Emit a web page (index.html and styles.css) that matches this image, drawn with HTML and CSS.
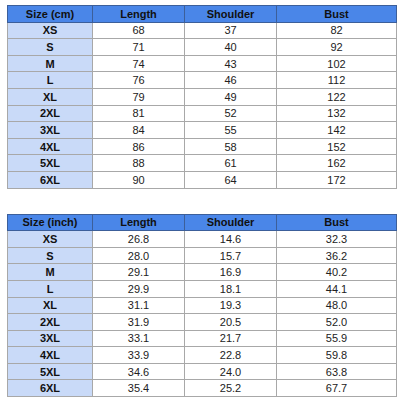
FILE: index.html
```html
<!DOCTYPE html>
<html>
<head>
<meta charset="utf-8">
<link rel="stylesheet" href="styles.css">
</head>
<body>
<div class="page">
<table class="size-table">
  <colgroup><col class="c1"><col class="c2"><col class="c3"><col class="c4"></colgroup>
  <thead><tr><th>Size (cm)</th><th>Length</th><th>Shoulder</th><th>Bust</th></tr></thead>
  <tbody>
    <tr><th>XS</th><td>68</td><td>37</td><td>82</td></tr>
    <tr><th>S</th><td>71</td><td>40</td><td>92</td></tr>
    <tr><th>M</th><td>74</td><td>43</td><td>102</td></tr>
    <tr><th>L</th><td>76</td><td>46</td><td>112</td></tr>
    <tr><th>XL</th><td>79</td><td>49</td><td>122</td></tr>
    <tr><th>2XL</th><td>81</td><td>52</td><td>132</td></tr>
    <tr><th>3XL</th><td>84</td><td>55</td><td>142</td></tr>
    <tr><th>4XL</th><td>86</td><td>58</td><td>152</td></tr>
    <tr><th>5XL</th><td>88</td><td>61</td><td>162</td></tr>
    <tr><th>6XL</th><td>90</td><td>64</td><td>172</td></tr>
  </tbody>
</table>
<table class="size-table">
  <colgroup><col class="c1"><col class="c2"><col class="c3"><col class="c4"></colgroup>
  <thead><tr><th>Size (inch)</th><th>Length</th><th>Shoulder</th><th>Bust</th></tr></thead>
  <tbody>
    <tr><th>XS</th><td>26.8</td><td>14.6</td><td>32.3</td></tr>
    <tr><th>S</th><td>28.0</td><td>15.7</td><td>36.2</td></tr>
    <tr><th>M</th><td>29.1</td><td>16.9</td><td>40.2</td></tr>
    <tr><th>L</th><td>29.9</td><td>18.1</td><td>44.1</td></tr>
    <tr><th>XL</th><td>31.1</td><td>19.3</td><td>48.0</td></tr>
    <tr><th>2XL</th><td>31.9</td><td>20.5</td><td>52.0</td></tr>
    <tr><th>3XL</th><td>33.1</td><td>21.7</td><td>55.9</td></tr>
    <tr><th>4XL</th><td>33.9</td><td>22.8</td><td>59.8</td></tr>
    <tr><th>5XL</th><td>34.6</td><td>24.0</td><td>63.8</td></tr>
    <tr><th>6XL</th><td>35.4</td><td>25.2</td><td>67.7</td></tr>
  </tbody>
</table>
</div>
</body>
</html>
```
FILE: styles.css
```css
html, body {
  margin: 0;
  padding: 0;
  background: #ffffff;
}
.page {
  padding: 5px 0 0 7px;
  display: flex;
  flex-direction: column;
  gap: 25px;
}
.size-table {
  border-collapse: collapse;
  table-layout: fixed;
  width: 389px;
  font-family: "Liberation Sans", Arial, sans-serif;
  font-size: 11px;
  color: #111;
  border: 1px solid #9a9a9a;
}
.c1 { width: 85px; }
.c2 { width: 92px; }
.c3 { width: 92px; }
.c4 { width: 120px; }
.size-table th,
.size-table td {
  height: 15.6px;
  padding: 0;
  text-align: center;
  border: 1px solid #a8a8a8;
  line-height: 14px;
}
.size-table thead th {
  background: #4a86e8;
  font-weight: bold;
  border-color: #3c5f9a;
  color: #111;
}
.size-table tbody th {
  background: #c9daf8;
  font-weight: bold;
}
.size-table tbody td {
  background: #ffffff;
  color: #222;
}
```
